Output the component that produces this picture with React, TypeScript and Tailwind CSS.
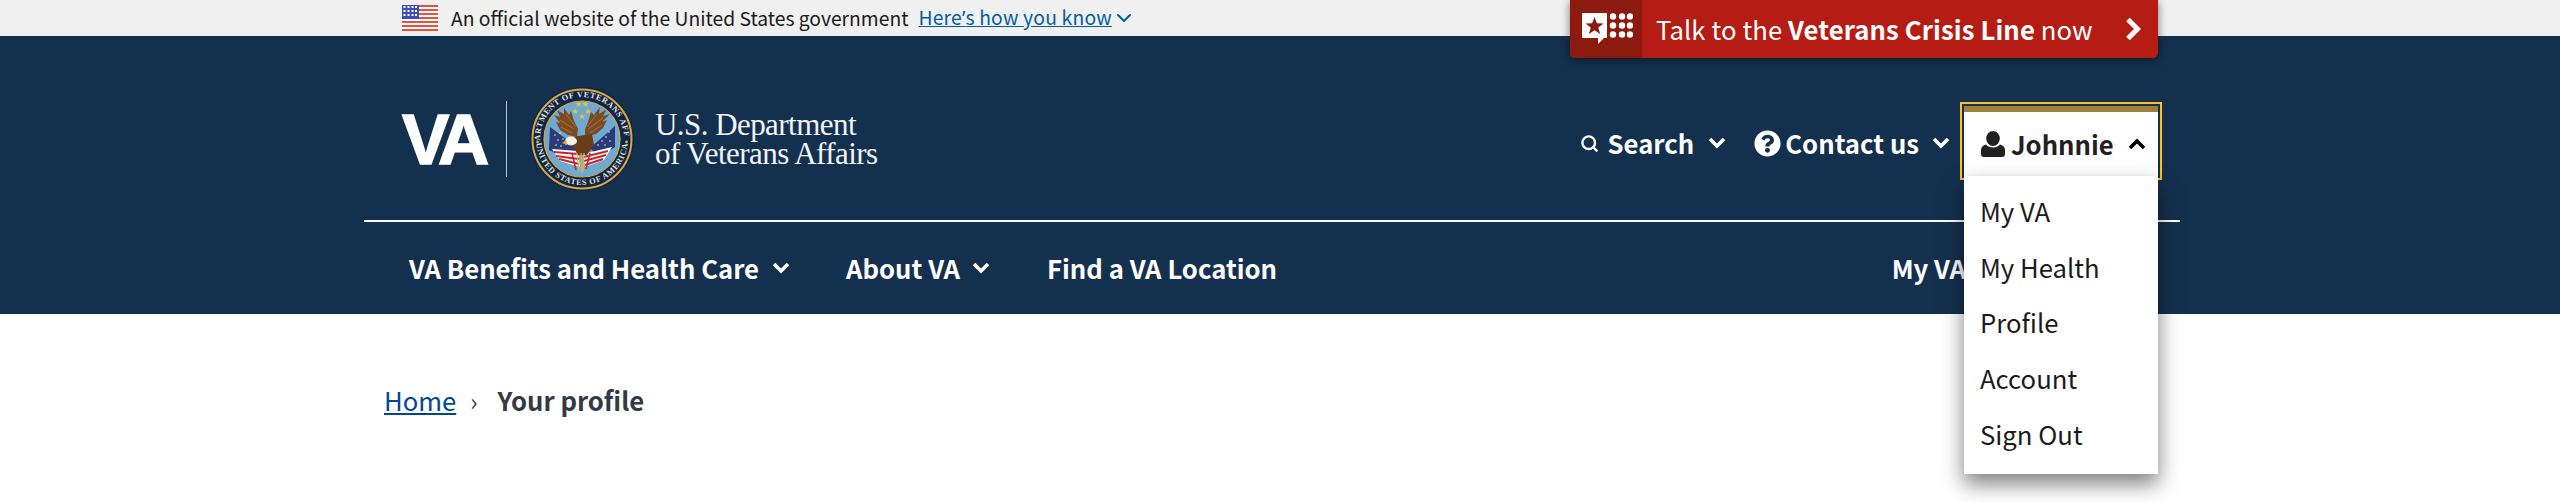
import { ChevronDown, Search } from "lucide-react";
import { FaQuestionCircle } from "react-icons/fa";

const sans = "font-['Noto_Sans_CJK_SC','Noto_Sans',sans-serif]";

const Caret = ({ up = false, className = "" }: { up?: boolean; className?: string }) => (
  <svg width="18" height="12" viewBox="0 0 18 12" className={`shrink-0 ${className}`}>
    <path d={up ? "M2 10l7-7 7 7" : "M2 2l7 7 7-7"} fill="none" stroke="currentColor" strokeWidth="3.6" />
  </svg>
);

const PersonIcon = () => (
  <svg width="24" height="26" viewBox="0 0 24 26" className="shrink-0">
    <ellipse cx="12" cy="7.5" rx="6.8" ry="7.5" fill="currentColor" />
    <path d="M5 13.5c-3 .6-5 2.6-5 5.5v4a3 3 0 0 0 3 3h18a3 3 0 0 0 3-3v-4c0-2.900-2-4.900-5-5.500-1.500 2-4 3-7 3s-5.500-1-7-3z" fill="currentColor" />
  </svg>
);

const FlagIcon = () => (
  <svg width="36" height="26" viewBox="0 0 36 26" className="shrink-0">
    <rect width="36" height="26" fill="#fff" />
    {[0, 4, 8, 12, 16, 20, 24].map((y) => (
      <rect key={y} y={y} width="36" height="2" fill="#e8513f" />
    ))}
    <rect width="17" height="14" fill="#3b4fb8" />
    {[2, 6, 10].map((y) =>
      [2.5, 6.5, 10.5, 14].map((x) => <rect key={`${x}-${y}`} x={x - 1} y={y - 1} width="2" height="2" fill="#fff" />)
    )}
  </svg>
);

const CrisisIcon = () => (
  <svg width="51" height="31" viewBox="0 0 51 31">
    <path d="M1 0h23a1 1 0 0 1 1 1v23a1 1 0 0 1-1 1H22l-6 6v-6H1a1 1 0 0 1-1-1V1a1 1 0 0 1 1-1z" fill="#fff" />
    <path d="M12.5 4l2.400 6.200 6.600.3-5.200 4.100 1.800 6.400-5.600-3.700-5.600 3.700 1.800-6.400-5.200-4.100 6.600-.3z" fill="#8c1a0f" />
    {[3.5, 12.5, 21.5].map((y) =>
      [31, 40, 48].map((x) => <circle key={`${x}-${y}`} cx={x} cy={y} r="3.2" fill="#fff" />)
    )}
  </svg>
);

const star = (x: number, y: number) =>
  `M${x} ${y - 3}l.9 2.100 2.200.1-1.700 1.400.6 2.200-2-1.200-2 1.200.6-2.200-1.700-1.400 2.200-.1z`;

const Seal = () => (
  <svg width="104" height="104" viewBox="0 0 104 104" className="shrink-0">
    <defs>
      <path id="sealTop" d="M10 52a42 42 0 0 1 84 0" />
      <path id="sealBottom" d="M6 52a46 46 0 0 0 92 0" />
      <clipPath id="sealInner">
        <circle cx="52" cy="52" r="37" />
      </clipPath>
    </defs>
    <circle cx="52" cy="52" r="52" fill="#10254a" />
    <circle cx="52" cy="52" r="49.5" fill="#10254a" stroke="#d9a93f" strokeWidth="2" />
    <text fontSize="8.2" fontWeight="700" fill="#e6e3d0" fontFamily="'Liberation Serif',serif" letterSpacing=".55">
      <textPath href="#sealTop" startOffset="50%" textAnchor="middle">DEPARTMENT OF VETERANS AFFAIRS</textPath>
    </text>
    <text fontSize="8.2" fontWeight="700" fill="#e6e3d0" fontFamily="'Liberation Serif',serif" letterSpacing=".7">
      <textPath href="#sealBottom" startOffset="50%" textAnchor="middle">UNITED STATES OF AMERICA</textPath>
    </text>
    <circle cx="7.5" cy="55" r="1.4" fill="#d9a93f" />
    <circle cx="96.5" cy="55" r="1.4" fill="#d9a93f" />
    <circle cx="52" cy="52" r="38" fill="#6fa9cf" stroke="#d9a93f" strokeWidth="1.2" />
    <g clipPath="url(#sealInner)">
      <path d="M20 40L47 60 41 74 19 63z" fill="#2b3a78" />
      <path d="M85 39L60 61 69 70 85 60z" fill="#2b3a78" />
      {[[25, 48], [30, 46], [28, 53], [33, 52], [36, 57], [31, 59], [26, 58], [76, 50], [72, 54], [79, 45], [68, 58], [75, 58], [80, 54]].map(([x, y]) => (
        <circle key={`${x}-${y}`} cx={x} cy={y} r=".8" fill="#e8edf5" />
      ))}
      <path d="M22 62L48 64 50 80 30 74z" fill="#fff" />
      <path d="M24 65L48 67M26 69L49 72M29 72L49 77" stroke="#c4262e" strokeWidth="2.2" />
      <path d="M53 67L82 60 74 73 55 80z" fill="#fff" />
      <path d="M54 70L78 64M54 74L76 68M55 78L73 72" stroke="#c4262e" strokeWidth="2.2" />
      <path d="M47 50L38 48 30 43 26 35 30 36 24 28 30 30 27 23 34 27 34 21 39 28 41 24 44 34 48 42z" fill="#7c4a22" />
      <path d="M55 50L66 47 73 41 77 33 72 35 80 27 73 29 77 22 69 27 70 20 64 28 61 25 58 35 55 42z" fill="#7c4a22" />
      <path d="M31 40L42 46M30 33L44 42M36 27L46 40M72 38L60 46M73 31L58 42M67 27L57 40" stroke="#a9733c" strokeWidth="1" />
      <path d="M42 50L62 47 64 58 57 68 48 68 43 60z" fill="#6a3c1b" />
      <ellipse cx="41" cy="54" rx="6" ry="4.4" fill="#f3efe6" />
      <path d="M36 53L32 56 37 58z" fill="#e0a92f" />
      <path d="M47 66L49 84M51 66L52 86M54 66L53 84" stroke="#e0b53c" strokeWidth="1.3" />
      <path d="M42 66L46 83M60 66L56 82" stroke="#c4262e" strokeWidth="1.6" />
      <path d={star(48.7, 17) + star(55.3, 17) + star(45.3, 24.3) + star(58, 24.3) + star(52, 29.3)} fill="#e8c33f" />
    </g>
  </svg>
);

const menuItems = ["My VA", "My Health", "Profile", "Account", "Sign Out"];

const UtilityNav = () => (
  <div className="ml-auto mr-[18px] mt-[15px] flex items-start text-white">
    <div className="mt-[24px] flex h-[34px] items-center">
      <Search size={19} strokeWidth={3} className="shrink-0" />
      <span className="ml-[9px] text-[25.7px] font-bold leading-none">Search</span>
      <Caret className="ml-[14px]" />
    </div>
    <div className="ml-[28px] mt-[24px] flex h-[34px] items-center">
      <FaQuestionCircle size={27} className="shrink-0" />
      <span className="ml-[4px] text-[25.7px] font-bold leading-none">Contact us</span>
      <Caret className="ml-[13px]" />
    </div>
    <div className="relative ml-[10px] h-[78px] w-[202px] border-2 border-[#ffbe2e] p-[2px]">
      <div className="h-full w-full border-t-[6px] border-[#9a8339] bg-white pl-[17px] pt-[19px] text-[#212121]">
        <div className="flex items-center">
          <PersonIcon />
          <span className="ml-[6px] text-[25.7px] font-bold leading-none">Johnnie</span>
          <Caret up className="ml-[14px] text-black" />
        </div>
      </div>
      <div className="absolute left-[2px] top-[72px] z-10 flex h-[298px] w-[194px] flex-col bg-white pl-[16px] pt-[7px] text-[#1b1b1b] shadow-[0_10px_20px_rgba(0,0,0,0.5)]">
        {menuItems.map((item) => (
          <a key={item} className="flex h-[55.7px] items-center text-[25.7px] leading-none">
            {item}
          </a>
        ))}
      </div>
    </div>
  </div>
);

export default function App() {
  return (
    <div className={`relative min-h-[502px] bg-white ${sans}`}>
      <div className="h-9 bg-[#f0f0f0]">
        <div className="ml-[364px] flex h-full w-[1816px] items-center pl-[38px] text-[19.3px] text-[#1b1b1b]">
          <FlagIcon />
          <span className="ml-[13px]">An official website of the United States government</span>
          <a className="ml-[10px] flex items-center tracking-[0.2px] text-[#005ea2]">
            <span className="underline">
              Here<span className="font-['Noto_Sans',sans-serif]">’</span>s how you know
            </span>
            <ChevronDown size={24} strokeWidth={2} />
          </a>
        </div>
      </div>

      <div className="absolute left-[1570px] top-0 z-20 flex h-[58px] w-[588px] overflow-hidden rounded-b-[5px] bg-[#b51d14] text-white shadow-[0_2px_10px_rgba(0,0,0,0.5)]">
        <div className="flex w-[72px] shrink-0 items-center justify-center bg-[#8c1a0f] pb-[1px] pl-[2px]">
          <CrisisIcon />
        </div>
        <div className="ml-[14px] flex items-center whitespace-nowrap text-[25.7px] tracking-[0.1px]">
          <span>
            Talk to the <b className="font-bold">Veterans Crisis Line</b> now
          </span>
        </div>
        <svg width="16" height="24" viewBox="0 0 16 24" className="ml-auto mr-[17px] self-center">
          <path d="M3 2.500l9.500 9.500-9.500 9.500" fill="none" stroke="currentColor" strokeWidth="5" />
        </svg>
      </div>

      <header className="h-[278px] bg-[#14304f]">
        <div className="ml-[364px] w-[1816px]">
          <div className="flex h-[184px] pt-[51px]">
            <div className="flex h-[104px] items-center pl-[38px]">
              <span className="w-[85px] font-['Liberation_Sans',sans-serif] text-[71px] font-bold leading-none tracking-[-6px] text-white [-webkit-text-stroke:1.5px_#fff]">VA</span>
              <div className="ml-[19px] h-[76px] w-[1px] bg-[#b9c2cc]" />
              <div className="ml-[23px]"><Seal /></div>
              <div className="ml-[21px] font-['Liberation_Serif',serif] text-[31px] leading-[29px] tracking-[-0.55px] text-[#f2f4f6]">
                U.S. Department
                <br />
                of Veterans Affairs
              </div>
            </div>
            <UtilityNav />
          </div>
          <div className="h-[2px] bg-white" />
          <nav className="flex h-[92px] items-center pl-[45px] text-[25.7px] font-bold text-white">
            <span>VA Benefits and Health Care</span>
            <Caret className="ml-[13px]" />
            <span className="ml-[56px]">About VA</span>
            <Caret className="ml-[12px]" />
            <span className="ml-[57px]">Find a VA Location</span>
            <span className="ml-auto mr-[214px]">My VA</span>
          </nav>
        </div>
      </header>

      <main className="ml-[384px] flex items-baseline pt-[66px] text-[25.7px] leading-[40px]">
        <a className="text-[#004795] underline">Home</a>
        <span className="ml-[14px] text-[24px] text-[#323a45]">›</span>
        <span className="ml-[20px] font-bold text-[#323a45]">Your profile</span>
      </main>
    </div>
  );
}
